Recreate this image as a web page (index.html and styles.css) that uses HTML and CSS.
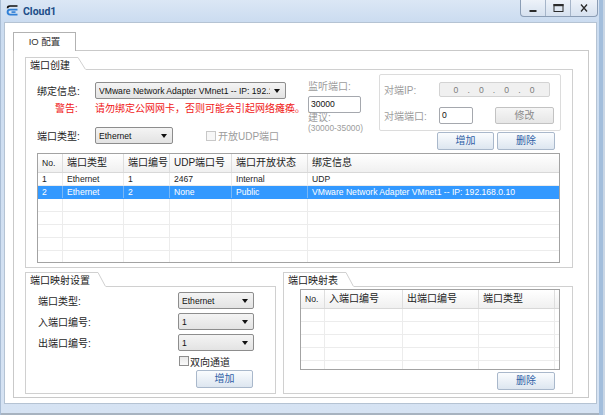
FILE: index.html
```html
<!DOCTYPE html>
<html>
<head>
<meta charset="utf-8">
<link rel="stylesheet" href="styles.css">
</head>
<body>
<div class="win">
  <div class="titlebar">
    <svg class="appicon" width="13" height="13" viewBox="0 0 13 13">
      <path d="M1.6 3.2 C1.6 1.6 2.6 1 4 1 L11.5 1" fill="none" stroke="#111" stroke-width="1.7"/>
      <path d="M11.5 4.6 L4.2 4.6 C2.3 4.6 1.6 5.6 1.6 7.1 C1.6 8.7 2.5 9.6 4.2 9.6 L11.5 9.6" fill="none" stroke="#2f7fd6" stroke-width="1.9"/>
      <rect x="5.5" y="6.3" width="4" height="1.6" fill="#2f7fd6"/>
    </svg>
    <span class="title">Cloud1</span>
    <div class="ctrls">
      <div class="cbtn"><svg width="10" height="10" viewBox="0 0 10 10"><rect x="1.5" y="7" width="7" height="2" fill="#2b2b2b"/></svg></div>
      <div class="cbtn"><svg width="11" height="10" viewBox="0 0 11 10"><rect x="1" y="1.5" width="9" height="7" fill="none" stroke="#2b2b2b"/><rect x="0.5" y="1" width="10" height="2.2" fill="#2b2b2b"/></svg></div>
      <div class="cbtn"><svg width="10" height="10" viewBox="0 0 10 10"><path d="M2 1.5 L8 8.5 M8 1.5 L2 8.5" stroke="#2b2b2b" stroke-width="1.3"/></svg></div>
    </div>
  </div>
  <div class="client">
    <div class="tabstrip"><div class="tab">IO 配置</div></div>
    <div class="page">
      <div class="group g1">
        <div class="ghead h13">
          <div class="glabel">端口创建</div>
          <svg class="slant" width="8" height="13" viewBox="0 0 8 13"><path d="M0 0.5 L7.5 12.5" stroke="#d0d0d0" fill="none"/></svg>
          <div class="gfill"></div>
        </div>
        <div class="gbody b1">
          <div class="form">
            <div class="colL">
              <div class="frow r1">
                <span class="lbl">绑定信息:</span>
                <div class="sel w191"><span class="seltxt en">VMware Network Adapter VMnet1 -- IP: 192.168.0.10</span><i class="arr"></i></div>
              </div>
              <div class="frow r2">
                <span class="lbl warnlbl">警告:</span>
                <span class="warn">请勿绑定公网网卡，否则可能会引起网络瘫痪。</span>
              </div>
              <div class="frow r3">
                <span class="lbl">端口类型:</span>
                <div class="sel w77"><span class="seltxt en">Ethernet</span><i class="arr"></i></div>
                <span class="chk disabled"></span>
                <span class="dis">开放UDP端口</span>
              </div>
            </div>
            <div class="colM">
              <div class="mline dis">监听端口:</div>
              <div class="inp w52 en">30000</div>
              <div class="sline dis">建议:</div>
              <div class="sline dis en">(30000-35000)</div>
            </div>
            <div class="colR">
              <div class="ipbox">
                <div class="iprow">
                  <span class="rlbl dis">对端IP:</span>
                  <div class="ipfield en"><span>0</span><span>.</span><span>0</span><span>.</span><span>0</span><span>.</span><span>0</span></div>
                </div>
                <div class="iprow r2b">
                  <span class="rlbl dis">对端端口:</span>
                  <div class="inp w34 en">0</div>
                  <div class="btn btndis w59">修改</div>
                </div>
              </div>
              <div class="btnrow">
                <div class="btn w57">增加</div>
                <div class="btn w58">删除</div>
              </div>
            </div>
          </div>
          <div class="tbl t1">
            <div class="thead">
              <div class="c a1 en">No.</div><div class="c a2">端口类型</div><div class="c a3">端口编号</div><div class="c a4">UDP端口号</div><div class="c a5">端口开放状态</div><div class="c a6">绑定信息</div>
            </div>
            <div class="trow en">
              <div class="c a1">1</div><div class="c a2">Ethernet</div><div class="c a3">1</div><div class="c a4">2467</div><div class="c a5">Internal</div><div class="c a6">UDP</div>
            </div>
            <div class="trow en sel-row">
              <div class="c a1">2</div><div class="c a2">Ethernet</div><div class="c a3">2</div><div class="c a4">None</div><div class="c a5">Public</div><div class="c a6">VMware Network Adapter VMnet1 -- IP: 192.168.0.10</div>
            </div>
            <div class="trow"><div class="c a1"></div><div class="c a2"></div><div class="c a3"></div><div class="c a4"></div><div class="c a5"></div><div class="c a6"></div></div>
            <div class="trow"><div class="c a1"></div><div class="c a2"></div><div class="c a3"></div><div class="c a4"></div><div class="c a5"></div><div class="c a6"></div></div>
            <div class="trow"><div class="c a1"></div><div class="c a2"></div><div class="c a3"></div><div class="c a4"></div><div class="c a5"></div><div class="c a6"></div></div>
            <div class="trow"><div class="c a1"></div><div class="c a2"></div><div class="c a3"></div><div class="c a4"></div><div class="c a5"></div><div class="c a6"></div></div>
            <div class="trow"><div class="c a1"></div><div class="c a2"></div><div class="c a3"></div><div class="c a4"></div><div class="c a5"></div><div class="c a6"></div></div>
          </div>
        </div>
      </div>

      <div class="row2">
        <div class="group g2">
          <div class="ghead h15">
            <div class="glabel">端口映射设置</div>
            <svg class="slant" width="8" height="15" viewBox="0 0 8 15"><path d="M0 0.5 L7.5 14.5" stroke="#d0d0d0" fill="none"/></svg>
            <div class="gfill"></div>
          </div>
          <div class="gbody b2">
            <div class="mrow"><span class="mlbl">端口类型:</span><div class="sel w76"><span class="seltxt en">Ethernet</span><i class="arr"></i></div></div>
            <div class="mrow"><span class="mlbl">入端口编号:</span><div class="sel w76"><span class="seltxt en">1</span><i class="arr"></i></div></div>
            <div class="mrow"><span class="mlbl">出端口编号:</span><div class="sel w76"><span class="seltxt en">1</span><i class="arr"></i></div></div>
            <div class="chkrow"><span class="chk"></span><span>双向通道</span></div>
            <div class="addrow"><div class="btn w57">增加</div></div>
          </div>
        </div>
        <div class="group g3">
          <div class="ghead h15">
            <div class="glabel">端口映射表</div>
            <svg class="slant" width="8" height="15" viewBox="0 0 8 15"><path d="M0 0.5 L7.5 14.5" stroke="#d0d0d0" fill="none"/></svg>
            <div class="gfill"></div>
          </div>
          <div class="gbody b3">
            <div class="tbl t2">
              <div class="thead">
                <div class="c m1 en">No.</div><div class="c m2">入端口编号</div><div class="c m3">出端口编号</div><div class="c m4">端口类型</div><div class="c m5"></div>
              </div>
              <div class="trow"><div class="c m1"></div><div class="c m2"></div><div class="c m3"></div><div class="c m4"></div><div class="c m5"></div></div>
              <div class="trow"><div class="c m1"></div><div class="c m2"></div><div class="c m3"></div><div class="c m4"></div><div class="c m5"></div></div>
              <div class="trow"><div class="c m1"></div><div class="c m2"></div><div class="c m3"></div><div class="c m4"></div><div class="c m5"></div></div>
              <div class="trow"><div class="c m1"></div><div class="c m2"></div><div class="c m3"></div><div class="c m4"></div><div class="c m5"></div></div>
              <div class="trow"><div class="c m1"></div><div class="c m2"></div><div class="c m3"></div><div class="c m4"></div><div class="c m5"></div></div>
            </div>
            <div class="delrow"><div class="btn w58">删除</div></div>
          </div>
        </div>
      </div>
    </div>
  </div>
</div>
</body>
</html>
```

FILE: styles.css
```css
* { box-sizing: border-box; }
html, body { margin: 0; padding: 0; }
body {
  width: 605px;
  height: 415px;
  overflow: hidden;
  font-family: "Liberation Sans", "Noto Sans CJK SC", sans-serif;
  font-size: 10px;
  color: #1e1e1e;
  background: #fff;
}
.en { font-size: 8.6px; }

.win {
  width: 605px;
  height: 415px;
  background: linear-gradient(#dbe7f5 0px, #cbdcf0 22px, #d6e3f3 100%);
  border-left: 1px solid #a9bdd5;
  box-shadow: inset -2px 0 0 #c9d6e5, inset -6px 0 0 #a3bedc, inset 0 -2px 0 #a7b3c0;
  display: flex;
  flex-direction: column;
}

/* title bar */
.titlebar {
  height: 22px;
  display: flex;
  align-items: flex-start;
  padding-left: 5px;
}
.appicon { margin-top: 5px; }
.title {
  margin-left: 4px;
  margin-top: 5px;
  font-family: Roboto, "Liberation Sans", sans-serif;
  font-weight: 700;
  font-size: 10.5px;
  line-height: 13px;
  color: #214d88;
}
.ctrls {
  margin-left: auto;
  margin-right: 7px;
  display: flex;
  height: 17px;
  border: 1px solid #8b9db5;
  border-top: none;
  border-radius: 0 0 4px 4px;
  background: linear-gradient(#edf2f9, #d6e1ef);
  overflow: hidden;
}
.cbtn {
  width: 25px;
  display: flex;
  align-items: center;
  justify-content: center;
  border-right: 1px solid #a6b5c9;
}
.cbtn:last-child { border-right: none; width: 26px; }

/* client area */
.client {
  margin-left: 3px;
  width: 593px;
  height: 382px;
  border: 1px solid #b5c3d3;
  background: #fff;
  padding: 9px 7px 5px 8px;
}
.tabstrip { height: 18px; display: flex; }
.tab {
  position: relative;
  z-index: 1;
  width: 63px;
  height: 19px;
  border: 1px solid #b2b2b2;
  border-bottom: none;
  background: #fff;
  text-align: center;
  line-height: 17px;
  font-size: 9.5px;
  color: #333;
}
.page {
  width: 576px;
  height: 348px;
  border: 1px solid #c9c9c9;
  padding: 6px 0 0 11px;
}

/* group boxes */
.group { display: flex; flex-direction: column; }
.g1 { width: 548px; }
.ghead { display: flex; }
.h13 { height: 13px; }
.h15 { height: 15px; }
.glabel {
  border-top: 1px solid #d0d0d0;
  border-left: 1px solid #d0d0d0;
  padding-left: 4px;
  padding-right: 8px;
  line-height: 16px;
  white-space: nowrap;
  color: #222;
}
.h13 .glabel { line-height: 15px; }
.slant { flex: none; display: block; }
.gfill { flex: 1; border-bottom: 1px solid #d0d0d0; }
.gbody {
  border: 1px solid #d0d0d0;
  border-top: none;
}
.b1 { height: 198px; padding: 0 11px 0 11px; }

.form { height: 83px; display: flex; }
.colL { width: 271px; padding-top: 12px; }
.frow { display: flex; align-items: center; }
.r1 { height: 17px; }
.r2 { height: 14px; margin-top: 1px; }
.r3 { height: 17px; margin-top: 13px; }
.lbl { width: 58px; flex: none; white-space: nowrap; }
.warnlbl { padding-left: 18px; color: #f01818; }
.warn { color: #f01818; white-space: nowrap; }

.sel {
  height: 17px;
  border: 1px solid #8d8d8d;
  border-radius: 2px;
  background: linear-gradient(#f4f4f4, #e3e3e3);
  display: flex;
  align-items: center;
  padding-left: 3px;
  flex: none;
}
.seltxt { flex: 1; overflow: hidden; white-space: nowrap; color: #111; }
.arr {
  flex: none;
  width: 0; height: 0;
  border-left: 3.5px solid transparent;
  border-right: 3.5px solid transparent;
  border-top: 4px solid #111;
  margin: 0 5px 0 4px;
}
.w191 { width: 191px; }
.w77 { width: 78px; }
.w76 { width: 76px; }

.chk {
  width: 10px; height: 10px;
  border: 1px solid #8e8e8e;
  background: linear-gradient(#e9e9e9, #fafafa);
  flex: none;
}
.chk.disabled { border-color: #c8c8c8; background: #f7f7f7; margin-left: 33px; margin-right: 2px; }
.dis { color: #9c9c9c; white-space: nowrap; }

.colM { width: 71px; padding-top: 11px; }
.mline { line-height: 12px; height: 12px; }
.inp {
  height: 17px;
  border: 1px solid #a5a8ae;
  border-radius: 2px;
  background: #fff;
  padding-left: 2px;
  line-height: 15px;
  color: #111;
}
.w52 { width: 53px; margin-top: 3px; }
.w34 { width: 34px; }
.sline { line-height: 10px; height: 10px; }
.sline.en { font-size: 8.4px; }

.colR { width: 182px; padding-top: 4px; }
.ipbox {
  height: 57px;
  border: 1px solid #dcdcdc;
  border-radius: 2px;
  padding: 7px 0 0 4px;
}
.iprow { display: flex; align-items: center; height: 15px; }
.r2b { height: 17px; margin-top: 10px; }
.rlbl { width: 55px; flex: none; }
.ipfield {
  width: 111px;
  height: 15px;
  border: 1px solid #d3d3d3;
  border-radius: 2px;
  background: #f0f0f0;
  display: flex;
  justify-content: space-around;
  align-items: center;
  padding: 0 10px 0 9px;
  color: #7c7c7c;
}
.btn {
  height: 18px;
  border: 1px solid #a9b8cb;
  border-radius: 2px;
  background: linear-gradient(#fafcfe, #dde6f0);
  color: #2f5fa6;
  text-align: center;
  line-height: 16px;
  flex: none;
}
.btndis {
  height: 17px;
  margin-left: 22px;
  border-color: #c2c2c2;
  background: linear-gradient(#f6f6f6, #e6e6e6);
  color: #8c8c8c;
  line-height: 15px;
}
.w57 { width: 57px; }
.w58 { width: 58px; }
.w59 { width: 59px; }
.btnrow { display: flex; justify-content: flex-end; gap: 3px; margin-top: 1px; padding-right: 6px; }

/* tables */
.tbl {
  border: 1px solid #a3a3a3;
  overflow: hidden;
}
.t1 { height: 110px; width: 523px; }
.thead {
  display: flex;
  height: 19px;
  border-bottom: 1px solid #d8d8d8;
  background: linear-gradient(#ffffff, #f0f0f0);
  line-height: 18px;
  color: #222;
}
.thead .c { border-right: 1px solid #dedede; }
.trow {
  display: flex;
  height: 13px;
  border-bottom: 1px solid #ececec;
  line-height: 12px;
}
.c {
  flex: none;
  padding-left: 4px;
  border-right: 1px solid #ececec;
  overflow: hidden;
  white-space: nowrap;
}
.a1 { width: 25px; }
.a2 { width: 61px; }
.a3 { width: 46px; }
.a4 { width: 62px; }
.a5 { width: 76px; }
.a6 { flex: 1; border-right: none; }
.thead .a6 { border-right: none; }
.sel-row { background: #3399ff; color: #fff; border-bottom-color: #3399ff; }
.sel-row .c { border-right-color: #7ab8f5; }

/* bottom row */
.row2 { display: flex; gap: 7px; margin-top: 4px; }
.g2 { width: 251px; }
.g3 { width: 290px; }
.b2 { height: 107px; padding: 5px 0 0 12px; }
.mrow { display: flex; align-items: center; height: 17px; margin-bottom: 4px; }
.mlbl { width: 140px; flex: none; }
.chkrow { display: flex; align-items: center; height: 12px; padding-left: 141px; margin-top: 1px; gap: 1px; white-space: nowrap; }
.chkrow .chk { width: 10px; height: 10px; }
.addrow { padding-left: 158px; margin-top: 3px; }

.b3 { height: 107px; padding: 2px 0 0 16px; }
.t2 { height: 81px; width: 260px; }
.m1 { width: 24px; }
.m2 { width: 78px; }
.m3 { width: 76px; }
.m4 { width: 76px; }
.m5 { flex: 1; border-right: none; }
.t2 .trow .m5 { border-right: none; }
.delrow { display: flex; justify-content: flex-end; padding-right: 17px; margin-top: 2px; }
```
